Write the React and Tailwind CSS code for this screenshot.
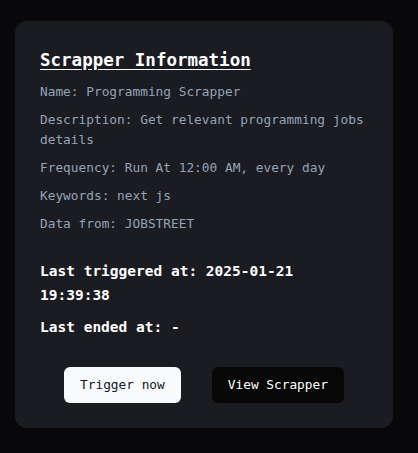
import React from 'react';

const details = [
  { label: 'Name', value: 'Programming Scrapper' },
  { label: 'Description', value: 'Get relevant programming jobs details' },
  { label: 'Frequency', value: 'Run At 12:00 AM, every day' },
  { label: 'Keywords', value: 'next js' },
  { label: 'Data from', value: 'JOBSTREET' },
];

const App = () => {
  return (
    <div
      className="min-h-[453px] bg-[#08080a] pl-[15px] pr-[25px] py-[21px]"
      style={{ fontFamily: '"DejaVu Sans Mono", "Liberation Mono", monospace' }}
    >
      <div className="bg-[#1b1c21] rounded-xl p-[25px]">
        <h2 className="text-[17.5px] leading-[28px] font-bold text-white underline underline-offset-[3px] mb-2">
          Scrapper Information
        </h2>

        <div className="space-y-2">
          {details.map((d) => (
            <p key={d.label} className="text-[12.8px] leading-5 text-[#94a3b8]">
              {d.label}: {d.value}
            </p>
          ))}
        </div>

        <div className="mt-[25px] space-y-2">
          <p className="text-[14.5px] leading-6 font-bold text-white">
            Last triggered at: 2025-01-21 19:39:38
          </p>
          <p className="text-[14.5px] leading-6 font-bold text-white">
            Last ended at: -
          </p>
        </div>

        <div className="mt-7 flex justify-center gap-[31px]">
          <button className="h-9 px-4 rounded-md bg-[#f8fafc] text-[#111827] text-[12.8px]">
            Trigger now
          </button>
          <button className="h-9 px-4 rounded-md bg-[#070707] text-white text-[12.8px]">
            View Scrapper
          </button>
        </div>
      </div>
    </div>
  );
};

export default App;
